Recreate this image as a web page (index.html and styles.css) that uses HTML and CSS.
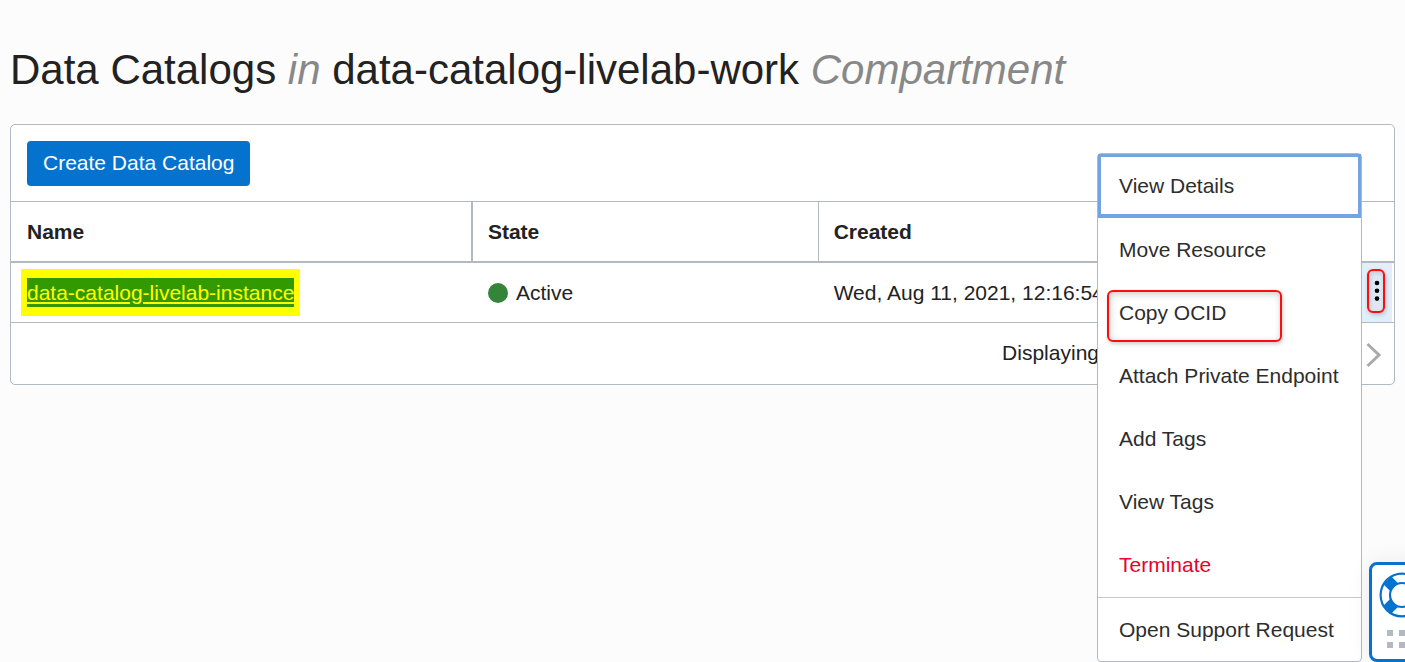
FILE: index.html
```html
<!DOCTYPE html>
<html lang="en">
<head>
<meta charset="utf-8">
<title>Data Catalogs</title>
<link rel="stylesheet" href="styles.css">
</head>
<body>
<main class="page">
  <h1 class="title">Data Catalogs <em>in</em> data-catalog-livelab-work <em>Compartment</em></h1>
  <section class="panel">
    <div class="toolbar"><button class="create" type="button">Create Data Catalog</button></div>
    <table class="grid">
      <colgroup><col class="col-name"><col class="col-state"><col><col class="col-actions"></colgroup>
      <thead>
        <tr><th class="wide-rule" scope="col">Name</th><th class="rule" scope="col">State</th><th scope="col">Created</th><td></td></tr>
      </thead>
      <tbody>
        <tr>
          <td><a class="name-link" href="#"><span class="name-text">data-catalog-livelab-instance</span></a></td>
          <td><span class="state">Active</span></td>
          <td>Wed, Aug 11, 2021, 12:16:54</td>
          <td class="actions">
            <button class="kebab" type="button" aria-label="Actions">
              <svg width="6" height="22" viewBox="0 0 6 22" aria-hidden="true"><circle cx="3" cy="3" r="2.3"/><circle cx="3" cy="10.8" r="2.3"/><circle cx="3" cy="18.6" r="2.3"/></svg>
            </button>
          </td>
        </tr>
      </tbody>
    </table>
    <div class="footer">
      <span>Displaying</span>
      <button class="next" type="button" aria-label="Next page">
        <svg width="16" height="26" viewBox="0 0 16 26" aria-hidden="true"><path d="M1.5 2 L13 13 L1.5 24" fill="none" stroke="#aaa" stroke-width="3"/></svg>
      </button>
    </div>
    <div class="menu">
      <button class="item focused" type="button">View Details</button>
      <button class="item" type="button">Move Resource</button>
      <button class="item marked" type="button">Copy OCID</button>
      <button class="item" type="button">Attach Private Endpoint</button>
      <button class="item" type="button">Add Tags</button>
      <button class="item" type="button">View Tags</button>
      <button class="item danger" type="button">Terminate</button>
      <button class="item support" type="button">Open Support Request</button>
    </div>
  </section>
</main>
<button class="help" type="button" aria-label="Help">
  <svg width="46" height="46" viewBox="0 0 46 46" aria-hidden="true">
    <g fill="none" stroke="#0572ce">
      <path stroke-width="11" d="M8.5 8.5 L15 15 M37.5 8.5 L31 15 M8.5 37.5 L15 31 M37.5 37.5 L31 31"/>
      <circle cx="23" cy="23" r="21.4" stroke-width="2.2"/>
      <circle cx="23" cy="23" r="12" stroke-width="2.2"/>
    </g>
  </svg>
  <svg width="30" height="18" viewBox="0 0 30 18" fill="#b3b9c1" aria-hidden="true"><path d="M0 0h6v6H0zM12 0h6v6h-6zM24 0h6v6h-6zM0 12h6v6H0zM12 12h6v6h-6zM24 12h6v6h-6z"/></svg>
</button>
</body>
</html>
```

FILE: styles.css
```css
* { box-sizing: border-box; }
body {
  margin: 0;
  min-height: 100vh;
  overflow: hidden;
  background: #fcfcfc;
  color: #222;
  font: 21px/24px "Liberation Sans", Arial, sans-serif;
}
button { font: inherit; color: inherit; cursor: pointer; }
.page { padding: 40px 10px; }
.title { margin: 0 0 24px; font-size: 42px; line-height: 60px; font-weight: 400; }
.title em { color: #888; }
.panel {
  position: relative;
  background: #fff;
  border: 1px solid #b3b9c1;
  border-radius: 5px;
}
.toolbar { padding: 16px 16px 15px; border-bottom: 1px solid #b3b9c1; }
.create {
  display: block;
  height: 45px;
  padding: 0 16px 1px;
  border: 0;
  border-radius: 4px;
  background: #0572ce;
  color: #fff;
}
.grid { width: 100%; border-collapse: separate; border-spacing: 0; table-layout: fixed; }
.col-name { width: 33.4%; }
.col-state { width: 25%; }
.col-actions { width: 32px; }
.grid th, .grid td { height: 60px; padding: 0 0 0 15px; text-align: left; border-bottom: 1px solid #b3b9c1; white-space: nowrap; }
.grid tr > :first-child { padding-left: 16px; }
.grid thead th, .grid thead td { height: 61px; border-bottom-width: 2px; }
.grid .wide-rule { border-right: 2px solid #b3b9c1; }
.grid .rule { border-right: 1px solid #b3b9c1; }
.name-link {
  display: inline-block;
  margin-left: -6px;
  padding: 9px 6px;
  background: #ff0;
  color: #ff0;
  vertical-align: middle;
}
.name-text {
  display: block;
  padding: 3px 0 2px;
  background: #390;
  text-decoration: underline;
  text-decoration-thickness: 2px;
  text-underline-offset: 2px;
}
.state { display: flex; align-items: center; gap: 8px; }
.state::before { content: ""; width: 20px; height: 20px; border-radius: 50%; background: #348439; }
.grid .actions { padding: 0 2px 0 0; background: #e2effa; background-clip: content-box; }
.kebab {
  display: flex;
  align-items: center;
  justify-content: flex-end;
  width: 18px;
  height: 44px;
  margin: 0 0 4px 5px;
  padding: 0 3px 0 0;
  border: 2px solid #fe0d0d;
  border-radius: 6px;
  background: #dce8f3;
  box-shadow: 1px 2px 4px #0003, inset 1px 2px 4px #0002;
}
.footer { display: flex; align-items: center; justify-content: flex-end; gap: 267px; height: 61px; padding: 0 12px 2px 0; }
.next { display: flex; padding: 4px 0 0; border: 0; background: none; }
.menu {
  position: absolute;
  top: 28px;
  right: 32px;
  width: 265px;
  background: #fff;
  border: 1px solid #b3b9c1;
  border-radius: 4px;
}
.item { position: relative; display: block; width: 100%; height: 63px; padding: 0 0 0 21px; border: 0; background: none; color: #2d2d2d; text-align: left; }
.focused { height: 64px; border: solid #73a3e0; border-width: 3px 3px 4px; padding-left: 18px; }
.marked::after {
  content: "";
  position: absolute;
  inset: 9px 79px 2px 9px;
  border: 2px solid #fe0d0d;
  border-radius: 6px;
  box-shadow: 1px 2px 4px #0003, inset 1px 2px 7px #0003;
}
.item.danger { height: 64px; padding-bottom: 1px; color: #e8002d; }
.support { height: 64px; border-top: 1px solid #c6cacf; }
.help {
  position: fixed;
  right: -34px;
  bottom: 0;
  display: flex;
  flex-direction: column;
  align-items: center;
  gap: 12px;
  width: 70px;
  height: 100px;
  padding: 7px 5px 0 0;
  border: 3px solid #0572ce;
  border-radius: 8px;
  background: #fff;
  box-shadow: 0 0 24px #0001;
}
```
